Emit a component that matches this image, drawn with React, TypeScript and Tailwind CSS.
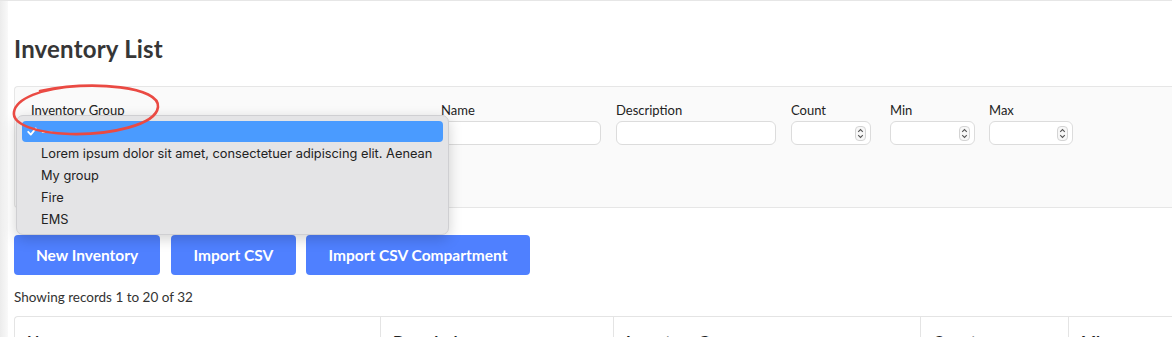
import React from "react";

const labelCls = "block text-[13px] leading-4 text-[#222] mb-[3px]";
const inputCls = "h-6 rounded-md border border-[#dcdcdc] bg-white";

function Spinner() {
  return (
    <div className="absolute right-[4px] top-[4px] flex h-[15px] w-[11px] flex-col items-center justify-center rounded-[4px] border border-[#d4d4d4] bg-[#f7f7f7]">
      <svg width="7" height="11" viewBox="0 0 7 11" fill="none" stroke="#555" strokeWidth="1.1">
        <path d="M1.2 3.8 3.5 1.6 5.8 3.8" />
        <path d="M1.2 7.2 3.5 9.4 5.8 7.2" />
      </svg>
    </div>
  );
}

function NumberInput({ w }: { w: string }) {
  return (
    <div className={`relative ${inputCls} ${w}`}>
      <Spinner />
    </div>
  );
}

const options = [
  "Lorem ipsum dolor sit amet, consectetuer adipiscing elit. Aenean",
  "My group",
  "Fire",
  "EMS",
];

const columns = [
  { name: "Name", w: "w-[365px]" },
  { name: "Description", w: "w-[233px]" },
  { name: "Inventory Group", w: "w-[307px]" },
  { name: "Count", w: "w-[148px]" },
  { name: "Min", w: "w-[160px]" },
];

export default function App() {
  return (
    <div className="relative flex h-[337px] w-[1172px] overflow-hidden border-t border-[#e6e6e6] bg-white font-['Lato',sans-serif] text-[#333]">
      {/* sidebar shadow */}
      <div className="w-[8px] shrink-0 bg-gradient-to-r from-[#ececec] to-[#f9f9f9]" />

      <div className="flex-1 pl-[6px]">
        <h1 className="mt-[34px] text-[24px] font-bold leading-[28px] tracking-[0.2px] text-[#363636]">Inventory List</h1>

        {/* filters */}
        <div className="mt-[23px] flex h-[122px] gap-[15px] rounded-l-[4px] border-y border-l border-[#e6e6e6] bg-[#fafafa] pl-[16px] pt-[15px]">
          <div className="w-[395px]">
            <span className={labelCls}>Inventory Group</span>
            <div className={`${inputCls} w-[395px]`} />
          </div>
          <div>
            <span className={labelCls}>Name</span>
            <div className={`${inputCls} w-[160px]`} />
          </div>
          <div>
            <span className={labelCls}>Description</span>
            <div className={`${inputCls} w-[160px]`} />
          </div>
          <div className="flex gap-[19px]">
            <div>
              <span className={labelCls}>Count</span>
              <NumberInput w="w-[80px]" />
            </div>
            <div>
              <span className={labelCls}>Min</span>
              <NumberInput w="w-[85px]" />
            </div>
            <div className="-ml-[5px]">
              <span className={labelCls}>Max</span>
              <NumberInput w="w-[84px]" />
            </div>
          </div>
        </div>

        {/* actions */}
        <div className="mt-[27px] flex gap-[11px]">
          <button className="h-10 w-[146px] rounded-[4px] bg-[#4f80ff] pt-[1px] text-[15.5px] font-bold text-white">New Inventory</button>
          <button className="h-10 w-[125px] rounded-[4px] bg-[#4f80ff] pt-[1px] text-[15.5px] font-bold text-white">Import CSV</button>
          <button className="ml-[-1px] h-10 w-[224px] rounded-[4px] bg-[#4f80ff] pt-[1px] text-[15.5px] font-bold text-white">Import CSV Compartment</button>
        </div>

        <p className="mt-[12px] text-[13.5px] leading-5 text-[#333]">Showing records 1 to 20 of 32</p>

        {/* table */}
        <div className="mt-[9px] flex rounded-tl-[4px] border-l border-t border-[#e4e4e4]">
          {columns.map((c, i) => (
            <div key={c.name} className={`${c.w} shrink-0 px-[12px] pt-[12px] ${i > 0 ? "border-l border-[#e4e4e4]" : ""}`}>
              <span className="text-[16px] font-bold leading-5 text-[#222]">{c.name}</span>
            </div>
          ))}
        </div>
      </div>

      {/* open select menu */}
      <div className="absolute left-[16px] top-[114px] h-[120px] w-[433px] rounded-[7px] border border-[#cfcfd2] bg-[#e4e4e6] px-[5px] pt-[5px] font-['Inter',sans-serif] shadow-[0_4px_14px_rgba(0,0,0,0.18)]">
        <div className="flex h-[21px] items-center rounded-[4px] bg-[#4a9bff] pl-[5px] text-[13px] text-white">
          <svg width="10" height="9" viewBox="0 0 10 9" fill="none" stroke="white" strokeWidth="1.8" strokeLinecap="round" strokeLinejoin="round">
            <path d="M1.2 4.8 3.8 7.6 8.8 1.4" />
          </svg>
          <span className="ml-[4px] font-semibold">--</span>
        </div>
        <div className="pt-[1px]">
          {options.map((o) => (
            <div key={o} className="flex h-[22px] items-center pl-[19px] text-[12.8px] text-[#222]">
              {o}
            </div>
          ))}
        </div>
      </div>

      {/* red annotation ring */}
      <svg className="pointer-events-none absolute left-0 top-[78px]" width="180" height="70" viewBox="0 0 180 70" fill="none">
        <path
          d="M40 12 C 95 1, 160 8, 158 28 C 156 46, 110 56, 70 55 C 35 54, 12 45, 14 33 C 16 20, 40 9, 80 7"
          stroke="#ea4a43"
          strokeWidth="2.6"
          strokeLinecap="round"
        />
      </svg>
    </div>
  );
}
